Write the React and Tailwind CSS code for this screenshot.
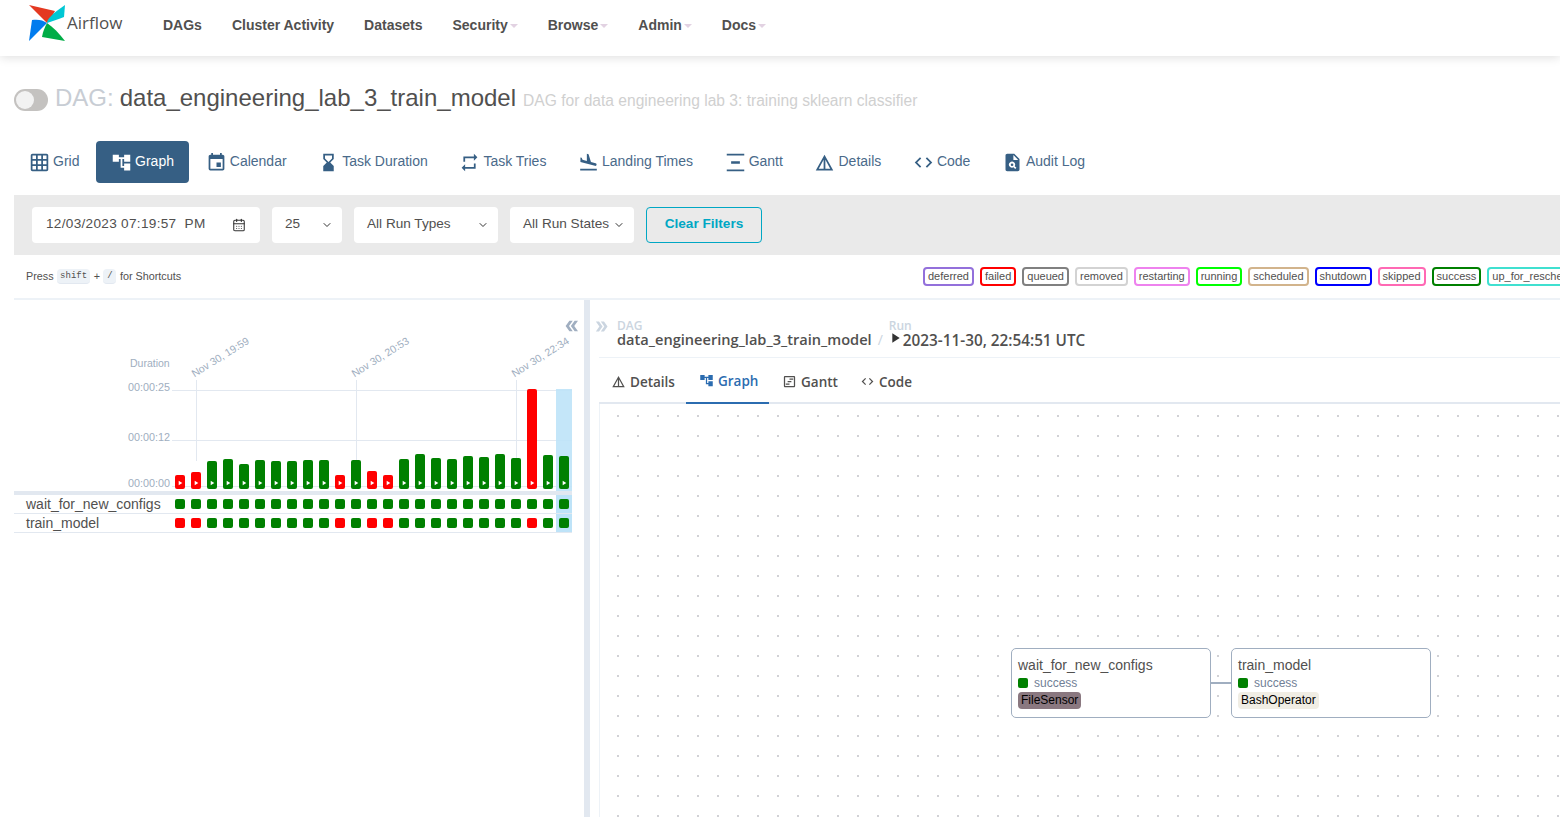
import React from 'react';
import {
  MdGridOn, MdAccountTree, MdEvent, MdHourglassBottom, MdRepeat, MdFlightLand,
  MdVerticalDistribute, MdDetails, MdCode, MdPlagiarism, MdPlayArrow, MdDoubleArrow,
  MdOutlineViewTimeline,
} from 'react-icons/md';
import { BiCode } from 'react-icons/bi';
import { CalendarDays, ChevronDown } from 'lucide-react';

const navItems = [
  { label: 'DAGs' },
  { label: 'Cluster Activity' },
  { label: 'Datasets' },
  { label: 'Security', caret: true },
  { label: 'Browse', caret: true },
  { label: 'Admin', caret: true },
  { label: 'Docs', caret: true },
];

const tabs = [
  { label: 'Grid', icon: MdGridOn, cls: 'pl-[15px] pr-[16.6px]' },
  { label: 'Graph', icon: MdAccountTree, active: true, cls: 'px-[15px] mr-px' },
  { label: 'Calendar', icon: MdEvent },
  { label: 'Task Duration', icon: MdHourglassBottom },
  { label: 'Task Tries', icon: MdRepeat },
  { label: 'Landing Times', icon: MdFlightLand },
  { label: 'Gantt', icon: MdVerticalDistribute },
  { label: 'Details', icon: MdDetails },
  { label: 'Code', icon: MdCode },
  { label: 'Audit Log', icon: MdPlagiarism },
];

const states = [
  { label: 'deferred', border: 'border-[#9370db]' },
  { label: 'failed', border: 'border-[#ff0000]' },
  { label: 'queued', border: 'border-[#808080]' },
  { label: 'removed', border: 'border-[#d3d3d3]' },
  { label: 'restarting', border: 'border-[#ee82ee]' },
  { label: 'running', border: 'border-[#00ff00]' },
  { label: 'scheduled', border: 'border-[#d2b48c]' },
  { label: 'shutdown', border: 'border-[#0000ff]' },
  { label: 'skipped', border: 'border-[#ff69b4]' },
  { label: 'success', border: 'border-[#008000]' },
  { label: 'up_for_reschedule', border: 'border-[#40e0d0]' },
];

const durations = [14, 17, 28, 30, 25, 29, 28, 28, 29, 29, 14, 29, 18, 14, 30, 35, 31, 30, 33, 32, 35, 31, 100, 34, 33];
const failedRuns = [0, 1, 10, 12, 13, 22];

const dateMarks = [
  { label: 'Nov 30, 19:59', left: 'left-[182px]', line: 'left-[182px] h-[81px]' },
  { label: 'Nov 30, 20:53', left: 'left-[342px]', line: 'left-[342px] h-[80px]' },
  { label: 'Nov 30, 22:34', left: 'left-[502px]', line: 'left-[502px] h-[80px]' },
];

const detailTabs = [
  { label: 'Details', icon: MdDetails, cls: 'w-[87px] pl-3' },
  { label: 'Graph', icon: MdAccountTree, active: true, cls: 'w-[83px] pl-[13px]' },
  { label: 'Gantt', icon: MdOutlineViewTimeline, cls: 'w-[78px] pl-[13px]' },
  { label: 'Code', icon: BiCode, cls: 'w-[78px] pl-[13px]' },
];

function Logo() {
  return (
    <svg viewBox="0 0 36 36" className="w-9 h-9 shrink-0">
      <path d="M0 0 L26 6 C24 10 21 14 18 18 Z" fill="#e43921" />
      <path d="M36 0 L35 12 C30 14 24 16 18 18 C18 14 23 9 36 0 Z" fill="#00c7d4" />
      <path d="M36 36 L13 32 C14 26 16 22 18 18 C24 22 30 28 36 36 Z" fill="#00ad46" />
      <path d="M0 36 L3 15 C9 14 14 15 18 18 C12 24 6 30 0 36 Z" fill="#017cee" />
    </svg>
  );
}

function Select({ label, cls }) {
  return (
    <div className={`h-9 bg-white rounded flex items-center justify-between pl-[13px] pr-[9px] text-[13.6px] text-[#51504f] ${cls}`}>
      <span className="pb-[2px]">{label}</span>
      <ChevronDown size={12} strokeWidth={2} className="text-[#333]" />
    </div>
  );
}

function Kbd({ children, cls = '' }) {
  return (
    <kbd className={`flex items-center justify-center pt-px px-[3px] h-[15px] rounded bg-[#edf2f7] border-b border-[#e2e8f0] text-[9px] font-['Liberation_Mono',monospace] ${cls}`}>
      {children}
    </kbd>
  );
}

function Square({ failed }) {
  return <div className={`w-2.5 h-2.5 rounded-[2px] ${failed ? 'bg-[#ff0000]' : 'bg-[#008000]'}`} />;
}

function TaskRow({ name, failed }) {
  return (
    <div className="flex h-[19px] border-b border-[#e2e8f0]">
      <div className="w-[158px] pl-3 text-sm leading-[18px] text-[#51504f]">{name}</div>
      {durations.map((_, i) => (
        <div key={i} className={`w-4 flex justify-center items-center ${i === 24 ? 'bg-[#bee3f8]' : ''}`}>
          <Square failed={failed && failedRuns.includes(i)} />
        </div>
      ))}
    </div>
  );
}

function Chart() {
  return (
    <div className="relative h-[191px]">
      <button className="absolute right-[-9px] top-[17px] text-[#a0aec0]">
        <MdDoubleArrow size={18} className="rotate-180" />
      </button>
      <div className="absolute left-[116px] top-[56px] text-[10.5px] text-[#a0aec0]">Duration</div>
      {[
        { label: '00:00:25', top: 'top-[81px]', line: 'top-[90px]' },
        { label: '00:00:12', top: 'top-[131px]', line: 'top-[140px]' },
        { label: '00:00:00', top: 'top-[177px]', line: 'top-[186px]' },
      ].map((t) => (
        <React.Fragment key={t.label}>
          <div className={`absolute left-[114px] text-[10.8px] leading-[13px] text-[#a0aec0] ${t.top}`}>{t.label}</div>
          <div className={`absolute left-[158px] right-0 h-px bg-[#e2e8f0] ${t.line}`} />
        </React.Fragment>
      ))}
      {dateMarks.map((m) => (
        <React.Fragment key={m.label}>
          <div className={`absolute top-[67px] text-[10.5px] leading-[13px] text-[#a0aec0] whitespace-nowrap origin-bottom-left -rotate-[32deg] ${m.left}`}>
            {m.label}
          </div>
          <div className={`absolute top-[80px] w-px bg-[#e2e8f0] ${m.line}`} />
        </React.Fragment>
      ))}
      <div className="absolute inset-0 flex pl-[158px] items-end">
        {durations.map((h, i) => (
          <div key={i} className={`w-4 flex justify-center items-end pb-0.5 ${i === 24 ? 'h-[102px] bg-[#bee3f8]/90' : ''}`}>
            <div
              className={`w-2.5 rounded-[2px] flex justify-center items-end pb-[2px] ${failedRuns.includes(i) ? 'bg-[#ff0000]' : 'bg-[#008000]'}`}
              style={{ height: h }}
            >
              <MdPlayArrow size={8} className="text-white" />
            </div>
          </div>
        ))}
      </div>
    </div>
  );
}

function GraphNode({ name, operator, tagCls, pos }) {
  return (
    <div className={`absolute w-[200px] h-[70px] bg-white border border-[#a0aec0] rounded-[5px] px-1.5 pt-1.5 ${pos}`}>
      <div className="text-sm leading-[20px] text-[#51504f]">{name}</div>
      <div className="flex items-center gap-1.5 h-[14px] mt-px">
        <div className="w-2.5 h-2.5 rounded-[2px] bg-[#008000]" />
        <span className="text-xs text-[#718096]">success</span>
      </div>
      <div className={`w-fit mt-[2px] px-[3px] h-[17px] leading-[16px] rounded text-xs text-black ${tagCls}`}>{operator}</div>
    </div>
  );
}

export default function App() {
  return (
    <div className="w-[1560px] h-[817px] overflow-hidden bg-white text-[#51504f] font-['Liberation_Sans',Arial,sans-serif]">
      <nav className="h-14 flex items-center bg-white shadow-[0_1px_10px_rgba(0,0,0,0.14)] relative">
        <div className="flex items-center ml-[29px] w-[134px] -mt-[10px]">
          <Logo />
          <span className="ml-[2px] -mt-[1px] text-[17px] text-[#51504f] font-['Open_Sans',sans-serif]">Airflow</span>
        </div>
        <div className="flex gap-[30px] -mt-[6px]">
          {navItems.map((n) => (
            <div key={n.label} className="flex items-center text-sm font-bold text-[#51504f]">
              {n.label}
              {n.caret && <span className="ml-[2px] mt-[2px] w-0 h-0 border-x-4 border-x-transparent border-t-4 border-t-[#e2d2e2]" />}
            </div>
          ))}
        </div>
      </nav>

      <div className="pl-[14px]">
        <div className="flex items-center h-[30px] mt-[29px]">
          <div className="w-[34px] h-[22px] rounded-full bg-[#c4c2c0] p-0.5 shrink-0">
            <div className="w-[18px] h-[18px] rounded-full bg-[#f2f2f2]" />
          </div>
          <span className="ml-[7px] -mt-1 text-2xl text-[#c8cdd4]">DAG:</span>
          <span className="ml-[6px] -mt-1 text-2xl text-[#51504f]">data_engineering_lab_3_train_model</span>
          <span className="ml-[7px] mt-px text-[15.6px] text-[#d0d0d0]">DAG for data engineering lab 3: training sklearn classifier</span>
        </div>

        <div className="flex mt-[26px] h-[42px]">
          {tabs.map(({ label, icon: Icon, active, cls }) => (
            <div
              key={label}
              className={`flex items-center gap-[3px] text-sm rounded ${cls || 'px-[15.8px]'} ${active ? 'bg-[#365f84] text-white' : 'text-[#4a6a8a]'}`}
            >
              <Icon size={21} className={active ? 'text-white' : 'text-[#365f84]'} />
              <span className="-mt-[2px]">{label}</span>
            </div>
          ))}
        </div>

        <div className="mt-3 h-[60px] bg-[#eaeaea] flex items-center gap-3 pl-[18px]">
          <div className="w-[228px] h-9 bg-white rounded flex items-center justify-between pl-[14px] pr-[14px] text-[13.6px] text-[#51504f]">
            <span className="tracking-[0.3px] whitespace-pre pb-[2px]">12/03/2023 07:19:57  PM</span>
            <CalendarDays size={14} strokeWidth={1.8} className="text-[#333]" />
          </div>
          <Select label="25" cls="w-[70px]" />
          <Select label="All Run Types" cls="w-[144px]" />
          <Select label="All Run States" cls="w-[124px]" />
          <button className="w-[116px] h-9 pb-[2px] rounded border border-[#00a7c4] text-[13.6px] font-bold text-[#00a7c4]">Clear Filters</button>
        </div>

        <div className="h-[45px] border-b-2 border-[#edf2f7] flex items-center">
          <div className="w-[909px] shrink-0 pl-3 flex items-center gap-[3.5px] text-[10.8px] text-[#51504f]">
            <span>Press</span>
            <Kbd>shift</Kbd>
            <span>+</span>
            <Kbd cls="w-[13px]">/</Kbd>
            <span>for Shortcuts</span>
          </div>
          <div className="flex gap-1.5 shrink-0">
            {states.map((s) => (
              <div key={s.label} className={`h-[19px] px-[3px] border-2 rounded text-[11px] leading-[15px] text-[#51504f] bg-white ${s.border}`}>
                {s.label}
              </div>
            ))}
          </div>
        </div>

        <div className="flex h-[517px]">
          <div className="w-[558px] shrink-0">
            <Chart />
            <div className="h-1 bg-[#e2e8f0]" />
            <TaskRow name="wait_for_new_configs" />
            <TaskRow name="train_model" failed />
          </div>
          <div className="ml-3 w-1.5 shrink-0 bg-[#e2e8f0]" />
          <div className="flex-1 min-w-0 flex flex-col pl-[9px]">
            <div className="relative h-[58px] pl-[18px] pt-5 border-b border-[#edf2f7] flex items-start font-['Open_Sans',sans-serif] whitespace-nowrap">
              <MdDoubleArrow size={17} className="absolute -left-[6px] top-[18px] text-[#cbd5e0]" />
              <div>
                <div className="text-xs leading-[12px] font-semibold text-[#cbd5e0]">DAG</div>
                <div className="-mt-px text-[14.6px] leading-[16px] font-semibold text-[#51504f]">data_engineering_lab_3_train_model</div>
              </div>
              <div className="ml-[6px] mt-3 text-sm leading-[16px] text-[#cbd5e0]">/</div>
              <div className="ml-[6px]">
                <div className="text-xs leading-[12px] font-semibold text-[#cbd5e0]">Run</div>
                <div className="flex items-center text-[15.3px] leading-[16px] font-semibold text-[#51504f]">
                  <MdPlayArrow size={16} className="-ml-[2px] -mt-[4px] text-[#333]" />
                  <span>2023-11-30, 22:54:51 UTC</span>
                </div>
              </div>
            </div>
            <div className="flex h-[46px] border-b-2 border-[#e2e8f0]">
              {detailTabs.map(({ label, icon: Icon, active, cls }) => (
                <div
                  key={label}
                  className={`flex items-center gap-[4px] h-[46px] text-[13.5px] font-semibold font-['Open_Sans',sans-serif] ${cls} ${active ? 'border-b-2 border-[#2b6cb0] text-[#2b6cb0]' : 'text-[#51504f]'}`}
                >
                  <Icon size={15} />
                  <span className="mt-[2px]">{label}</span>
                </div>
              ))}
            </div>
            <div className="relative flex-1 border-l border-[#edf2f7] bg-[radial-gradient(circle,#d0d0d4_0.7px,transparent_1px)] bg-[size:20px_20px] bg-[position:8px_2px]">
              <GraphNode name="wait_for_new_configs" operator="FileSensor" tagCls="bg-[#8a7880]" pos="left-[411px] top-[244px]" />
              <div className="absolute left-[611px] top-[278px] w-5 h-0.5 bg-[#a0aec0]" />
              <GraphNode name="train_model" operator="BashOperator" tagCls="bg-[#f0ede4]" pos="left-[631px] top-[244px]" />
            </div>
          </div>
        </div>
      </div>
    </div>
  );
}
